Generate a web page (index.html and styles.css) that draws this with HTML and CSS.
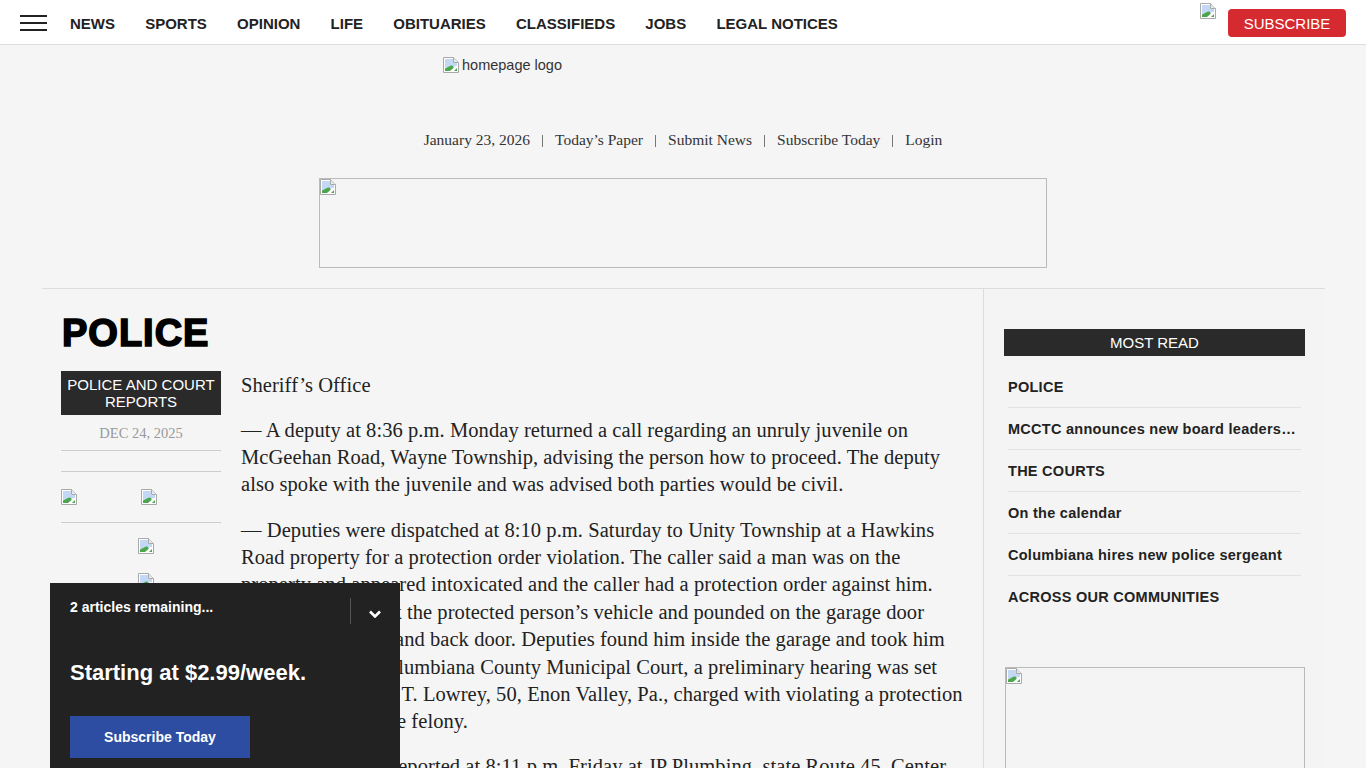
FILE: index.html
```html
<!DOCTYPE html>
<html>

<head>
	<meta charset="utf-8">
	<title>POLICE</title>
	<link rel="stylesheet" href="styles.css">
</head>

<body>
	<svg class="sprite" width="0" height="0">
		<symbol id="broken" viewBox="0 0 16 16">
			<path d="M0.5 0.5H10.5L15.5 5.5V15.5H0.5Z" fill="#fff" stroke="#a9a9a9" />
			<path d="M10.5 0.5V5.5H15.5" fill="#e8e8e8" stroke="#a9a9a9" />
			<path d="M2 2H10V6H14V9L2 11Z" fill="#c3d8f4" />
			<path d="M2 14V11.5L8 8.5C10 8 11 10 10.5 11L7 14Z" fill="#4ca64c" />
			<path d="M11 14L14 11V14Z" fill="#4ca64c" />
		</symbol>
	</svg>

	<header class="topbar">
		<button class="burger"><span></span><span></span><span></span></button>
		<nav class="mainnav">
			<a href="#">NEWS</a>
			<a href="#">SPORTS</a>
			<a href="#">OPINION</a>
			<a href="#">LIFE</a>
			<a href="#">OBITUARIES</a>
			<a href="#">CLASSIFIEDS</a>
			<a href="#">JOBS</a>
			<a href="#">LEGAL NOTICES</a>
		</nav>
		<div class="topright">
			<svg class="broken user-icon"><use href="#broken" /></svg>
			<a class="subscribe" href="#">SUBSCRIBE</a>
		</div>
	</header>

	<div class="logo"><svg class="broken"><use href="#broken" /></svg><span>homepage logo</span></div>

	<p class="dateline">
		<span>January 23, 2026</span><i></i>
		<a href="#">Today’s Paper</a><i></i>
		<a href="#">Submit News</a><i></i>
		<a href="#">Subscribe Today</a><i></i>
		<a href="#">Login</a>
	</p>

	<div class="ad-top"><svg class="broken"><use href="#broken" /></svg></div>

	<div class="wrapper">
		<main class="content">
			<h1>POLICE</h1>
			<div class="story">
				<aside class="meta">
					<div class="tag">POLICE AND COURT<br>REPORTS</div>
					<div class="date">DEC 24, 2025</div>
					<div class="empty-row"></div>
					<div class="share">
						<svg class="broken"><use href="#broken" /></svg>
						<svg class="broken"><use href="#broken" /></svg>
					</div>
					<div class="promo">
						<svg class="broken"><use href="#broken" /></svg>
						<svg class="broken"><use href="#broken" /></svg>
					</div>
				</aside>
				<article class="body">
					<p>Sheriff’s Office</p>
					<p>— A deputy at 8:36 p.m. Monday returned a call regarding an unruly juvenile on<br>
						McGeehan Road, Wayne Township, advising the person how to proceed. The deputy<br>
						also spoke with the juvenile and was advised both parties would be civil.</p>
					<p>— Deputies were dispatched at 8:10 p.m. Saturday to Unity Township at a Hawkins<br>
						Road property for a protection order violation. The caller said a man was on the<br>
						property and appeared intoxicated and the caller had a protection order against him.<br>
						He allegedly struck the protected person’s vehicle and pounded on the garage door<br>
						and tried the front and back door. Deputies found him inside the garage and took him<br>
						into custody. In Columbiana County Municipal Court, a preliminary hearing was set<br>
						for Dec. 30 for Jay T. Lowrey, 50, Enon Valley, Pa., charged with violating a protection<br>
						order, a fifth-degree felony.</p>
					<p>— A robbery was reported at 8:11 p.m. Friday at JP Plumbing, state Route 45, Center</p>
				</article>
			</div>
		</main>
		<aside class="sidebar">
			<h2>MOST READ</h2>
			<ul class="mostread">
				<li><a href="#">POLICE</a></li>
				<li><a href="#">MCCTC announces new board leadership</a></li>
				<li><a href="#">THE COURTS</a></li>
				<li><a href="#">On the calendar</a></li>
				<li><a href="#">Columbiana hires new police sergeant</a></li>
				<li><a href="#">ACROSS OUR COMMUNITIES</a></li>
			</ul>
			<div class="ad-side"><svg class="broken"><use href="#broken" /></svg></div>
		</aside>
	</div>

	<div class="meter">
		<div class="meter-top">
			<span>2 articles remaining...</span>
			<button class="collapse">
				<svg width="12" height="8" viewBox="0 0 12 8"><path d="M1 1.5L6 6.5L11 1.5" fill="none" stroke="#fff" stroke-width="2.6" /></svg>
			</button>
		</div>
		<div class="price">Starting at $2.99/week.</div>
		<a class="meter-btn" href="#">Subscribe Today</a>
	</div>
</body>

</html>
```

FILE: styles.css
```css
html,
body {
	height: 768px;
	overflow: hidden;
}

body {
	margin: 0;
	background-color: #f5f5f5;
	color: #222;
	font-family: "Liberation Sans", Arial, sans-serif;
}

a {
	color: inherit;
	text-decoration: none;
}

.sprite {
	display: block;
}

.broken {
	display: block;
	width: 16px;
	height: 16px;
}

.topbar {
	display: flex;
	align-items: flex-start;
	height: 44px;
	background-color: #fff;
	border-bottom: 1px solid #ddd;
	padding-left: 20px;
	padding-right: 20px;
}

.burger {
	display: flex;
	flex-direction: column;
	gap: 5px;
	width: 27px;
	margin-top: 15px;
	padding: 0;
	border: 0;
	background: none;
}

.burger span {
	display: block;
	width: 27px;
	height: 2px;
	background-color: #222;
}

.mainnav {
	display: flex;
	gap: 30.2px;
	margin-left: 23px;
	font-size: 15px;
	font-weight: bold;
	line-height: 47px;
	height: 44px;
}

.topright {
	display: flex;
	align-items: flex-start;
	margin-left: auto;
}

.user-icon {
	margin-top: 3px;
	margin-right: 12px;
}

.subscribe {
	display: block;
	width: 118px;
	height: 28px;
	margin-top: 9px;
	background-color: #d62a31;
	border-radius: 4px;
	color: #fff;
	font-size: 15px;
	line-height: 29px;
	text-align: center;
}

.logo {
	display: flex;
	height: 82px;
	padding-top: 12px;
	padding-left: 443px;
	font-size: 14.5px;
	color: #333;
	line-height: 17px;
	box-sizing: border-box;
}

.logo span {
	margin-left: 3px;
}

.dateline {
	display: flex;
	justify-content: center;
	margin: 0;
	height: 51px;
	padding-top: 4px;
	box-sizing: border-box;
	font-family: "Liberation Serif", serif;
	font-size: 15.5px;
	line-height: 18px;
	color: #333;
}

.dateline i {
	width: 1px;
	height: 12px;
	margin: 4px 12px 0;
	background-color: #777;
}

.ad-top {
	width: 726px;
	height: 88px;
	margin: 0 auto;
	border: 1px solid #bbb;
}

.wrapper {
	display: grid;
	grid-template-columns: 942px 341px;
	width: 1283px;
	margin: 20px 0 0 42px;
	border-top: 1px solid #ddd;
}

.content {
	padding-left: 19px;
	border-right: 1px solid #ddd;
	height: 480px;
}

h1 {
	margin: 24px 0 0 1px;
	font-family: "Liberation Sans", Arial, sans-serif;
	font-size: 38px;
	font-weight: bold;
	line-height: 40px;
	letter-spacing: 1px;
	color: #000;
	-webkit-text-stroke: 1.6px #000;
}

.story {
	display: flex;
	gap: 20px;
	margin-top: 18px;
}

.meta {
	width: 160px;
	flex-shrink: 0;
}

.tag {
	padding: 5px 0;
	background-color: #2a2a2a;
	color: #fff;
	font-size: 15px;
	line-height: 17px;
	text-align: center;
}

.date {
	height: 35px;
	border-bottom: 1px solid #ccc;
	font-family: "Liberation Serif", serif;
	font-size: 14.5px;
	line-height: 36px;
	color: #999;
	text-align: center;
}

.empty-row {
	height: 20px;
	border-bottom: 1px solid #ccc;
}

.share {
	display: flex;
	gap: 64px;
	height: 51px;
	padding-top: 17px;
	box-sizing: border-box;
	border-bottom: 1px solid #ccc;
}

.promo {
	display: flex;
	flex-direction: column;
	align-items: center;
	gap: 19px;
	padding-top: 15px;
	padding-left: 10px;
}

.body {
	width: 725px;
	flex-shrink: 0;
	padding-top: 0.5px;
	font-family: "Liberation Serif", serif;
	font-size: 20.5px;
	line-height: 27.4px;
	letter-spacing: 0.07px;
	color: #222;
	white-space: nowrap;
}

.body p {
	margin: 0 0 17.7px;
}

.sidebar {
	padding: 40px 20px 0;
	background-color: #f4f4f4;
}

.sidebar h2 {
	margin: 0;
	height: 27px;
	background-color: #2a2a2a;
	color: #fff;
	font-size: 15px;
	font-weight: normal;
	line-height: 28px;
	text-align: center;
}

.mostread {
	list-style: none;
	margin: 10px 0 0;
	padding: 0 4px;
}

.mostread li {
	height: 41px;
	border-bottom: 1px solid #e2e2e2;
	font-size: 14.5px;
	font-weight: bold;
	letter-spacing: 0.27px;
	line-height: 43px;
	overflow: hidden;
	text-overflow: ellipsis;
	white-space: nowrap;
}

.mostread li:last-child {
	border-bottom: 0;
}

.ad-side {
	width: 298px;
	height: 250px;
	margin-top: 50px;
	margin-left: 1px;
	border: 1px solid #bbb;
}

.meter {
	position: fixed;
	left: 50px;
	bottom: 0;
	width: 350px;
	height: 185px;
	padding: 0 20px;
	box-sizing: border-box;
	background-color: #222;
	color: #fff;
}

.meter-top {
	position: relative;
	height: 58px;
	font-size: 14px;
	font-weight: bold;
	line-height: 49px;
}

.collapse {
	position: absolute;
	left: 280px;
	top: 15px;
	width: 50px;
	height: 26px;
	padding: 0;
	border: 0;
	border-left: 1px solid #555;
	background: none;
}

.collapse svg {
	display: block;
	margin: 5px 0 0 18px;
}

.price {
	margin-top: 17px;
	font-size: 22px;
	font-weight: bold;
	line-height: 30px;
}

.meter-btn {
	display: block;
	width: 180px;
	height: 42px;
	margin-top: 28px;
	background-color: #2d4da2;
	font-size: 14px;
	font-weight: bold;
	line-height: 43px;
	text-align: center;
}
```
